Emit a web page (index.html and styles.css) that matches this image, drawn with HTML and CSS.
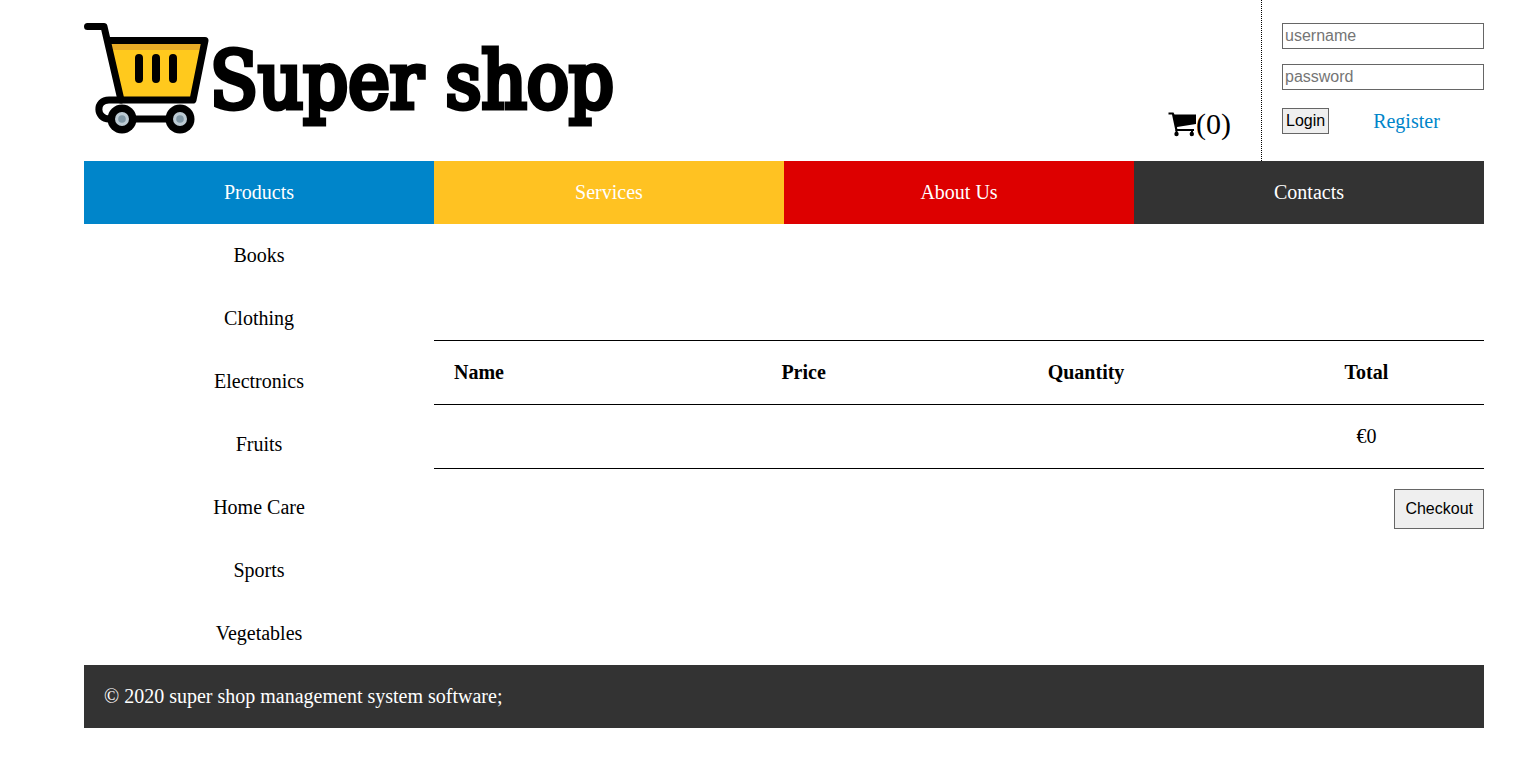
FILE: index.html
```html
<!DOCTYPE html>
<html lang="en">
<head>
<meta charset="utf-8">
<title>Super shop</title>
<link rel="stylesheet" href="styles.css">
</head>
<body>
<div class="page">
  <header class="header">
    <a class="logo" href="#">
      <svg class="logo-cart" width="126" height="112" viewBox="0 0 126 112" aria-hidden="true">
        <path d="M25 17H121L109 77H37Z" fill="#ffc91d"/>
        <path d="M26 20H120L119 27H27Z" fill="#e8ab26"/>
        <g fill="none" stroke="#000" stroke-width="7" stroke-linecap="round" stroke-linejoin="round">
          <path d="M3.500 3.500H20L37 77"/>
          <path d="M25 17.500H121L109 77H25C11 77 12 96 25 96H96"/>
          <path d="M55 35V56M72 35V56M89 35V56" stroke-width="8"/>
        </g>
        <circle cx="38" cy="96" r="14.500"/>
        <circle cx="96" cy="96" r="14.500"/>
        <g fill="#bccad3"><circle cx="38" cy="96" r="7"/><circle cx="96" cy="96" r="7"/></g>
        <g fill="#8097a5"><circle cx="38" cy="96" r="3.800"/><circle cx="96" cy="96" r="3.800"/></g>
      </svg>
      <span class="logo-text">Super shop</span>
    </a>
    <a class="cart" href="#">
      <svg width="28" height="25" viewBox="0 0 28 25" aria-hidden="true">
        <path d="M.5 .5H5.500L6.500 2.500H28V12L9 15L9.300 17H26V19H7.500L4 2.500H.5Z"/>
        <path d="M7.500 18H9.500V22H7.500ZM23 18H25V22H23Z"/>
        <circle cx="8.500" cy="22" r="2.200"/><circle cx="23.800" cy="22" r="2.200"/>
      </svg>
      <span>(0)</span>
    </a>
    <form class="login">
      <input class="field" type="text" placeholder="username" aria-label="username">
      <input class="field" type="password" placeholder="password" aria-label="password">
      <div class="login-actions">
        <button class="button" type="button">Login</button>
        <a class="register" href="#">Register</a>
      </div>
    </form>
  </header>
  <nav class="menu">
    <a class="menu-item blue" href="#">Products</a>
    <a class="menu-item yellow" href="#">Services</a>
    <a class="menu-item red" href="#">About Us</a>
    <a class="menu-item dark" href="#">Contacts</a>
  </nav>
  <div class="content">
    <nav class="categories">
      <a href="#">Books</a>
      <a href="#">Clothing</a>
      <a href="#">Electronics</a>
      <a href="#">Fruits</a>
      <a href="#">Home Care</a>
      <a href="#">Sports</a>
      <a href="#">Vegetables</a>
    </nav>
    <main class="basket">
      <table class="basket-table">
        <thead>
          <tr><th class="col-name">Name</th><th class="col-price">Price</th><th class="col-quantity">Quantity</th><th>Total</th></tr>
        </thead>
        <tbody>
          <tr><td></td><td></td><td></td><td>€0</td></tr>
        </tbody>
      </table>
      <button class="button checkout" type="button">Checkout</button>
    </main>
  </div>
  <footer class="footer">© 2020 super shop management system software;</footer>
</div>
</body>
</html>
```
FILE: styles.css
```css
* { box-sizing: border-box; }
body {
  margin: 0;
  background: #fff;
  color: #000;
  font: 20px/23px "Liberation Serif", "Times New Roman", serif;
}
a { color: inherit; text-decoration: none; }
.page { margin: 0 38px 0 84px; }

.header { display: flex; }
.logo {
  display: flex;
  align-items: flex-start;
  margin-right: auto;
  padding-top: 23px;
}
.logo-text {
  font-family: "DejaVu Serif Condensed", "DejaVu Serif", serif;
  font-size: 78px;
  line-height: 116px;
  -webkit-text-stroke: 5px #000;
  white-space: nowrap;
}
.cart {
  display: flex;
  align-items: center;
  align-self: flex-end;
  margin: 0 30px 20px 0;
  font-size: 30px;
  line-height: 34px;
}
.login {
  width: 223px;
  padding: 23px 0 27px 20px;
  border-left: 1px dotted #000;
}
.field, .button {
  height: 26px;
  padding: 1px 2px;
  border: 1px solid #666;
  border-radius: 0;
  font: 16px/20px "Liberation Sans", Arial, sans-serif;
}
.field { display: block; width: 100%; margin-bottom: 15px; background: #fff; }
.field::placeholder { color: #757575; }
.button { padding: 1px 3px; background: #efefef; color: #000; }
.login-actions { display: flex; align-items: center; gap: 44px; padding-top: 3px; }
.register { color: #0085ca; }

.menu { display: grid; grid-template-columns: repeat(4, 1fr); }
.menu-item { padding: 20px; color: #fff; text-align: center; }
.blue { background: #0085ca; }
.yellow { background: #ffc222; }
.red { background: #dd0000; }
.dark { background: #333; }

.content { display: grid; grid-template-columns: 1fr 3fr; }
.categories a { display: block; padding: 20px; text-align: center; }
.basket { padding-top: 116px; }
.basket-table { width: 100%; border-collapse: collapse; table-layout: fixed; }
.basket-table tr { height: 64px; border-top: 1px solid #000; border-bottom: 1px solid #000; }
.basket-table th, .basket-table td { padding: 20px; text-align: center; }
.basket-table .col-name { width: 23.8%; text-align: left; }
.col-price { width: 22.8%; }
.col-quantity { width: 31%; }
.checkout { display: block; height: 40px; margin: 20px 0 0 auto; padding: 0 10px; }

.footer { padding: 20px; background: #333; color: #fff; }
```
